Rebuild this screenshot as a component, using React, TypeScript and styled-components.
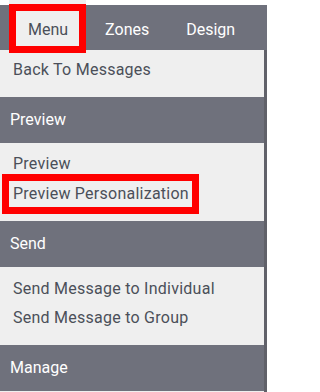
import styled, { createGlobalStyle } from "styled-components"

const GlobalStyle = createGlobalStyle`
  html, body {
    margin: 0;
    padding: 0;
    background: #ffffff;
  }
  body {
    font-family: Roboto, "Liberation Sans", sans-serif;
    font-size: 16px;
  }
`

const Frame = styled.div`
  width: 267px;
  height: 392px;
  overflow: hidden;
  display: flex;
  flex-direction: column;
`

const TabBar = styled.div`
  margin-top: 5px;
  height: 45px;
  padding-left: 9px;
  display: flex;
  background: #6f717c;
`

const Tab = styled.div<{ $active?: boolean }>`
  position: relative;
  padding: ${(p) => (p.$active ? "9px" : "4px")} 18px 0 19px;
  margin-top: ${(p) => (p.$active ? "-5px" : "0")};
  line-height: 41px;
  color: ${(p) => (p.$active ? "#4b4f59" : "#ffffff")};
  background: ${(p) => (p.$active ? "#efefef" : "transparent")};
  z-index: 1;

  /* red annotation frame over the active tab */
  &::after {
    content: ${(p) => (p.$active ? '""' : "none")};
    position: absolute;
    left: 0;
    right: 0;
    top: 4px;
    height: 49px;
    border: 7px solid #ff0000;
    box-sizing: border-box;
  }
`

const Body = styled.div`
  flex: 1;
  display: flex;
`

const Panel = styled.div`
  width: 264px;
  display: flex;
  flex-direction: column;
`

const ScrollEdge = styled.div`
  width: 3px;
  background: #606169;
`

const Section = styled.div<{ $top: number; $bottom: number }>`
  background: #efefef;
  padding: ${(p) => p.$top}px 0 ${(p) => p.$bottom}px;
`

const Header = styled.div`
  height: 46px;
  line-height: 46px;
  padding-left: 10px;
  background: #6f717c;
  color: #ffffff;
`

const Item = styled.div`
  height: 29px;
  line-height: 29px;
  padding-left: 13px;
  color: #4b4f59;
  letter-spacing: 0.25px;
  white-space: nowrap;
`

const Marked = styled.span`
  display: inline-block;
  margin-left: -4px;
  padding: 0 3px 0 4px;
  line-height: 26px;
  vertical-align: middle;
  outline: 7px solid #ff0000;
`

export default function App() {
  return (
    <Frame>
      <GlobalStyle />
      <TabBar>
        <Tab $active>Menu</Tab>
        <Tab>Zones</Tab>
        <Tab>Design</Tab>
      </TabBar>
      <Body>
        <Panel>
          <Section $top={5} $bottom={13}>
            <Item>Back To Messages</Item>
          </Section>
          <Header>Preview</Header>
          <Section $top={6} $bottom={14}>
            <Item>Preview</Item>
            <Item>
              <Marked>Preview Personalization</Marked>
            </Item>
          </Section>
          <Header>Send</Header>
          <Section $top={7} $bottom={13}>
            <Item>Send Message to Individual</Item>
            <Item>Send Message to Group</Item>
          </Section>
          <Header>Manage</Header>
          <Section $top={6} $bottom={14} />
        </Panel>
        <ScrollEdge />
      </Body>
    </Frame>
  )
}
